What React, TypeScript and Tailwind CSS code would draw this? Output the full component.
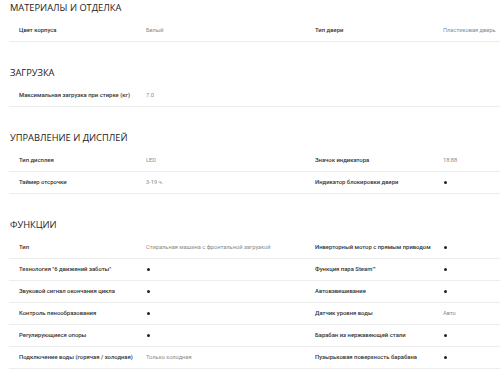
import React from "react";

type Cell = string | true | null;
type Row = [string, Cell, string?, Cell?];

const sections: { title: string; rows: Row[] }[] = [
  { title: "МАТЕРИАЛЫ И ОТДЕЛКА", rows: [["Цвет корпуса", "Белый", "Тип двери", "Пластиковая дверь"]] },
  { title: "ЗАГРУЗКА", rows: [["Максимальная загрузка при стирке (кг)", "7.0"]] },
  {
    title: "УПРАВЛЕНИЕ И ДИСПЛЕЙ",
    rows: [
      ["Тип дисплея", "LED", "Значок индикатора", "18:88"],
      ["Таймер отсрочки", "3-19 ч.", "Индикатор блокировки двери", true],
    ],
  },
  {
    title: "ФУНКЦИИ",
    rows: [
      ["Тип", "Стиральная машина с фронтальной загрузкой", "Инверторный мотор с прямым приводом", true],
      ["Технология \"6 движений заботы\"", true, "Функция пара Steam™", true],
      ["Звуковой сигнал окончания цикла", true, "Автовзвешивание", true],
      ["Контроль пенообразования", true, "Датчик уровня воды", "Авто"],
      ["Регулирующиеся опоры", true, "Барабан из нержавеющей стали", true],
      ["Подключение воды (горячая / холодная)", "Только холодная", "Пузырьковая поверхность барабана", true],
    ],
  },
];

function Value({ v }: { v: Cell | undefined }) {
  if (v === true) return <span className="block ml-[1px] w-[3px] h-[3px] rounded-full bg-[#222]" />;
  if (!v) return null;
  return <span className="text-[5.7px] text-[#8a8a8a]">{v}</span>;
}

export default function App() {
  return (
    <div className="w-[500px] h-[381px] overflow-hidden bg-white pl-[9px]">
      {sections.map((s, i) => (
        <div key={s.title} className={i === 0 ? "" : "mt-[23px]"}>
          <div
            className="pl-[1px] h-[15px] leading-[15px] text-[9.3px] text-[#222] font-medium whitespace-nowrap"
            style={{ fontFamily: '"Open Sans", "Noto Sans", sans-serif' }}
          >
            {s.title}
          </div>
          <div className="mt-[5px] w-[600px]" style={{ fontFamily: 'Roboto, "Noto Sans", sans-serif' }}>
            {s.rows.map((r, j) => (
              <div key={j} className="flex items-center h-[22px] border-b border-[#ededed] pl-[10px] text-[5.9px] whitespace-nowrap">
                <div className="w-[127px] shrink-0 text-[#333] font-medium">{r[0]}</div>
                <div className="w-[169px] shrink-0"><Value v={r[1]} /></div>
                <div className="w-[128px] shrink-0 text-[#333] font-medium">{r[2] ?? ""}</div>
                <div className="flex-1"><Value v={r[3]} /></div>
              </div>
            ))}
          </div>
        </div>
      ))}
    </div>
  );
}
